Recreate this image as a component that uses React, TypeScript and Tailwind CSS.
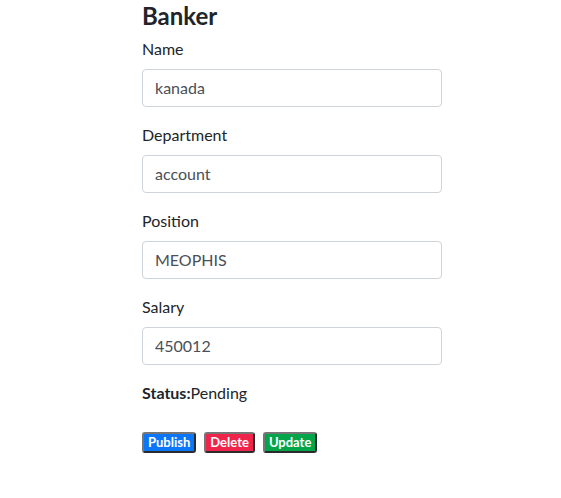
export default function App() {
  const fields = [
    { label: "Name", value: "kanada" },
    { label: "Department", value: "account" },
    { label: "Position", value: "MEOPHIS" },
    { label: "Salary", value: "450012" },
  ];
  const btn =
    "h-[21px] px-1 text-[13px] font-bold text-white rounded-[3px] border-2 border-t-[#767676] border-l-[#767676] border-b-[#2b2b2b] border-r-[#2b2b2b] leading-none";
  return (
    <div
      className="min-h-[498px] bg-white text-[#212529]"
      style={{ fontFamily: '"Segoe UI", Lato, "Noto Sans", sans-serif' }}
    >
      <div className="w-[300px] ml-[142px]">
        <h4 className="text-[24px] font-bold leading-[1.2] pt-[2px] mb-[6px]">Banker</h4>
        {fields.map((f) => (
          <div key={f.label} className="mb-4">
            <label className="block text-[16px] leading-6 mb-2">{f.label}</label>
            <input
              readOnly
              value={f.value}
              className="block w-full h-[38px] px-3 text-[16px] text-[#495057] border border-[#ced4da] rounded-[4px] outline-none bg-white"
            />
          </div>
        ))}
        <p className="text-[16px] leading-6 mt-[16px] mb-4">
          <b>Status:</b>Pending
        </p>
        <div className="flex gap-2 mt-[27px]">
          <button className={`${btn} bg-[#0b77f8]`}>Publish</button>
          <button className={`${btn} bg-[#f0244a]`}>Delete</button>
          <button className={`${btn} bg-[#03a54b]`}>Update</button>
        </div>
      </div>
    </div>
  );
}
